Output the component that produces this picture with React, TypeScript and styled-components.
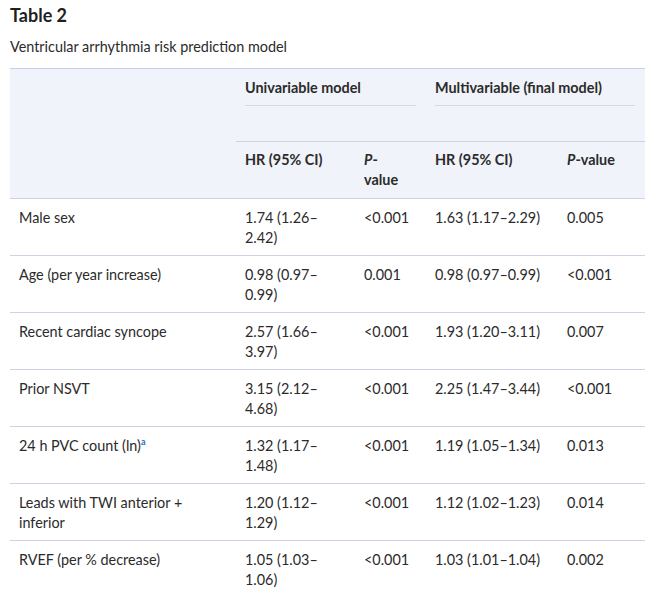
import React from "react";
import styled, { createGlobalStyle } from "styled-components";

const Global = createGlobalStyle`
  html, body { margin: 0; padding: 0; background: #ffffff; }
  body { font-family: Lato, "Open Sans", sans-serif; color: #2b2b2b; overflow: hidden; }
`;

const Page = styled.div`
  padding: 2px 0 0 10px;
`;

const Title = styled.h2`
  margin: 0;
  font-size: 18px;
  line-height: 26px;
  font-weight: 700;
  color: #1f1f1f;
`;

const Caption = styled.p`
  margin: 9px 0 0;
  font-size: 14.4px;
  line-height: 20px;
`;

const Table = styled.table`
  margin-top: 11px;
  width: 635px;
  table-layout: fixed;
  border-collapse: collapse;
  border-top: 1px solid #c9cfe6;
  font-size: 14.4px;
  line-height: 20px;
`;

const Head = styled.thead`
  background: #f0f3f9;
`;

const Th = styled.th<{ $narrow?: boolean; $bottom?: boolean }>`
  text-align: left;
  vertical-align: top;
  font-weight: 700;
  padding: 8px ${(p) => (p.$narrow ? "24px" : "9px")} 8px 9px;
  border-bottom: ${(p) => (p.$bottom ? "1px solid #cdd3e3" : "none")};
`;

const GroupTh = styled.th`
  text-align: left;
  vertical-align: top;
  font-weight: 700;
  padding: 9px 10px 35px 9px;
  border-bottom: 1px solid #cdd3e3;
`;

const GroupLabel = styled.span`
  display: block;
  padding-bottom: 7px;
  border-bottom: 1px solid #d3d8e6;
`;

const Row = styled.tr`
  border-bottom: 1px solid #cdd3e3;
`;

const Td = styled.td<{ $narrow?: boolean }>`
  vertical-align: top;
  padding: 9px ${(p) => (p.$narrow ? "24px" : "9px")} 7px 9px;
`;

const LabelTd = styled(Td)`
  padding-right: 24px;
`;

const Sup = styled.sup`
  font-size: 9px;
  line-height: 0;
  color: #1f6ec4;
  font-weight: 700;
  vertical-align: 6px;
`;

const rows: { label: React.ReactNode; uhr: string; up: string; mhr: string; mp: string }[] = [
  { label: "Male sex", uhr: "1.74 (1.26–2.42)", up: "<0.001", mhr: "1.63 (1.17–2.29)", mp: "0.005" },
  { label: "Age (per year increase)", uhr: "0.98 (0.97–0.99)", up: "0.001", mhr: "0.98 (0.97–0.99)", mp: "<0.001" },
  { label: "Recent cardiac syncope", uhr: "2.57 (1.66–3.97)", up: "<0.001", mhr: "1.93 (1.20–3.11)", mp: "0.007" },
  { label: "Prior NSVT", uhr: "3.15 (2.12–4.68)", up: "<0.001", mhr: "2.25 (1.47–3.44)", mp: "<0.001" },
  {
    label: (
      <>
        24 h PVC count (ln)<Sup>a</Sup>
      </>
    ),
    uhr: "1.32 (1.17–1.48)",
    up: "<0.001",
    mhr: "1.19 (1.05–1.34)",
    mp: "0.013",
  },
  { label: "Leads with TWI anterior + inferior", uhr: "1.20 (1.12–1.29)", up: "<0.001", mhr: "1.12 (1.02–1.23)", mp: "0.014" },
  { label: "RVEF (per % decrease)", uhr: "1.05 (1.03–1.06)", up: "<0.001", mhr: "1.03 (1.01–1.04)", mp: "0.002" },
];

export default function App() {
  return (
    <Page>
      <Global />
      <Title>Table 2</Title>
      <Caption>Ventricular arrhythmia risk prediction model</Caption>
      <Table>
        <colgroup>
          <col style={{ width: 226 }} />
          <col style={{ width: 119 }} />
          <col style={{ width: 71 }} />
          <col style={{ width: 132 }} />
          <col style={{ width: 87 }} />
        </colgroup>
        <Head>
          <tr>
            <Th rowSpan={2} $bottom />
            <GroupTh colSpan={2}>
              <GroupLabel>Univariable model</GroupLabel>
            </GroupTh>
            <GroupTh colSpan={2}>
              <GroupLabel>Multivariable (final model)</GroupLabel>
            </GroupTh>
          </tr>
          <tr>
            <Th $narrow $bottom>HR (95% CI)</Th>
            <Th $narrow $bottom>
              <i>P</i>-value
            </Th>
            <Th $bottom>HR (95% CI)</Th>
            <Th $bottom>
              <i>P</i>-value
            </Th>
          </tr>
        </Head>
        <tbody>
          {rows.map((r, i) => (
            <Row key={i}>
              <LabelTd>{r.label}</LabelTd>
              <Td $narrow>{r.uhr}</Td>
              <Td $narrow>{r.up}</Td>
              <Td>{r.mhr}</Td>
              <Td>{r.mp}</Td>
            </Row>
          ))}
        </tbody>
      </Table>
    </Page>
  );
}
